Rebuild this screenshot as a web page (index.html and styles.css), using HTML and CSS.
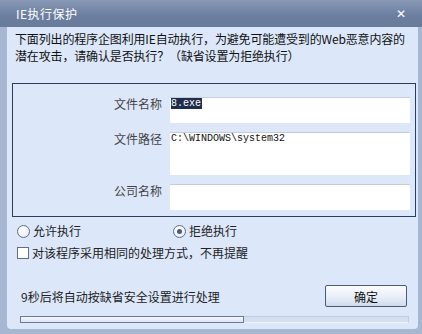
FILE: index.html
```html
<!DOCTYPE html>
<html lang="zh-CN">
<head>
	<meta charset="UTF-8">
	<title>IE执行保护</title>
	<link rel="stylesheet" href="styles.css">
</head>
<body>
	<div id="window">
		<div id="titlebar">
			<span class="title">IE执行保护</span>
			<span class="close">&#x2715;</span>
		</div>
		<div id="content">
			<div class="intro">
				<div class="line">下面列出的程序企图利用IE自动执行，为避免可能遭受到的Web恶意内容的</div>
				<div class="line">潜在攻击，请确认是否执行？（缺省设置为拒绝执行）</div>
			</div>

			<div id="group">
				<div class="label">文件名称</div>
				<div class="field"><span class="sel">8.exe</span></div>
				<div class="label">文件路径</div>
				<div class="field tall">C:\WINDOWS\system32</div>
				<div class="label">公司名称</div>
				<div class="field"></div>
			</div>

			<div class="row radios">
				<label class="opt first"><span class="radio"></span>允许执行</label>
				<label class="opt"><span class="radio on"></span>拒绝执行</label>
			</div>

			<div class="row check">
				<label class="opt"><span class="box"></span>对该程序采用相同的处理方式，不再提醒</label>
			</div>

			<div class="row bottom">
				<span class="timer">9秒后将自动按缺省安全设置进行处理</span>
				<div class="btn">确定</div>
			</div>

			<div id="progress"><div class="fill" style="width:58%"></div></div>
		</div>
	</div>
</body>
</html>
```

FILE: styles.css
```css
:root{
	--frame: #a7b7d1;
	--panel: #dce8fa;
	--line: #2b3d5a;
}

html, body{
	margin: 0;
	overflow: hidden;
}

body{
	font-family: "Noto Sans CJK SC", "Liberation Sans", sans-serif;
	font-size: 12px;
	color: #111;
}

#window{
	width: 422px;
	height: 334px;
	background: var(--frame);
	display: flex;
	flex-direction: column;
}

#titlebar{
	height: 27px;
	flex: none;
	display: flex;
	justify-content: space-between;
	align-items: center;
	padding: 0 16px 0 16px;
	background: linear-gradient(#8899b6, #6b7e9f 60%, #687b9b);
	color: #fff;
	box-sizing: border-box;
}

#titlebar .title{
	font-size: 12px;
	letter-spacing: 0.5px;
}

#titlebar .close{
	font-size: 12px;
	font-weight: bold;
	font-family: "DejaVu Sans", sans-serif;
}

#content{
	margin: 0 4px 5px 7px;
	padding: 3px 2px 0 5px;
	height: 302px;
	box-sizing: border-box;
	background: var(--panel);
	border-radius: 0 0 4px 4px;
}

.intro{
	margin: 0 0 0 3px;
	white-space: nowrap;
	letter-spacing: -0.15px;
}

.intro .line{
	height: 17px;
	line-height: 17px;
}

#group{
	margin-top: 19px;
	border: 1px solid var(--line);
	display: grid;
	grid-template-columns: 149px 240px;
	grid-template-rows: 26px 43px 26px;
	column-gap: 8px;
	row-gap: 9px;
	padding: 13px 0 6px 0;
}

.label{
	text-align: right;
	color: #444;
	line-height: 14px;
}

.field{
	background: #fff;
	border-top: 1px solid #c3ccd8;
	font-family: "Liberation Mono", monospace;
	font-size: 10px;
	line-height: 12px;
	padding: 0 1px;
	color: #111;
}

.sel{
	background: #1f2d4c;
	color: #fff;
	padding: 0 1px 0 0;
}

.row{
	display: flex;
	align-items: center;
}

.radios{
	margin-top: 7px;
	height: 14px;
	padding-left: 5px;
}

.opt{
	display: flex;
	align-items: center;
	gap: 3px;
	line-height: 14px;
	color: #222;
}

.opt.first{
	width: 156px;
}

.radio{
	width: 11px;
	height: 11px;
	border: 1px solid #5d6f8c;
	border-radius: 50%;
	background: radial-gradient(circle at 40% 35%, #fff, #e2e8f2);
	position: relative;
}

.radio.on::after{
	content: "";
	position: absolute;
	left: 3px;
	top: 3px;
	width: 5px;
	height: 5px;
	border-radius: 50%;
	background: #4b5b78;
}

.check{
	margin-top: 8px;
	height: 14px;
	padding-left: 5px;
}

.box{
	width: 10px;
	height: 10px;
	border: 1px solid #5d6f8c;
	background: #fff;
}

.bottom{
	margin-top: 25px;
	justify-content: space-between;
	padding: 0 9px 0 9px;
}

.timer{
	color: #222;
}

.btn{
	width: 80px;
	height: 20px;
	border: 1px solid #4a5b78;
	border-radius: 2px;
	background: linear-gradient(#fbfcfe, #e6edf7 60%, #cfdaea);
	display: flex;
	justify-content: center;
	align-items: center;
	color: #111;
}

#progress{
	margin: 9px 7px 0 8px;
	height: 7px;
	border: 1px solid #bfcce0;
	border-bottom-color: #eef3fa;
	background: #d3dff0;
	box-sizing: border-box;
}

.fill{
	height: 7px;
	margin-top: -1px;
	margin-left: -1px;
	box-sizing: border-box;
	border: 1px solid #6a7c99;
	background: linear-gradient(#f6f8fc, #dbe4f2);
}
```
